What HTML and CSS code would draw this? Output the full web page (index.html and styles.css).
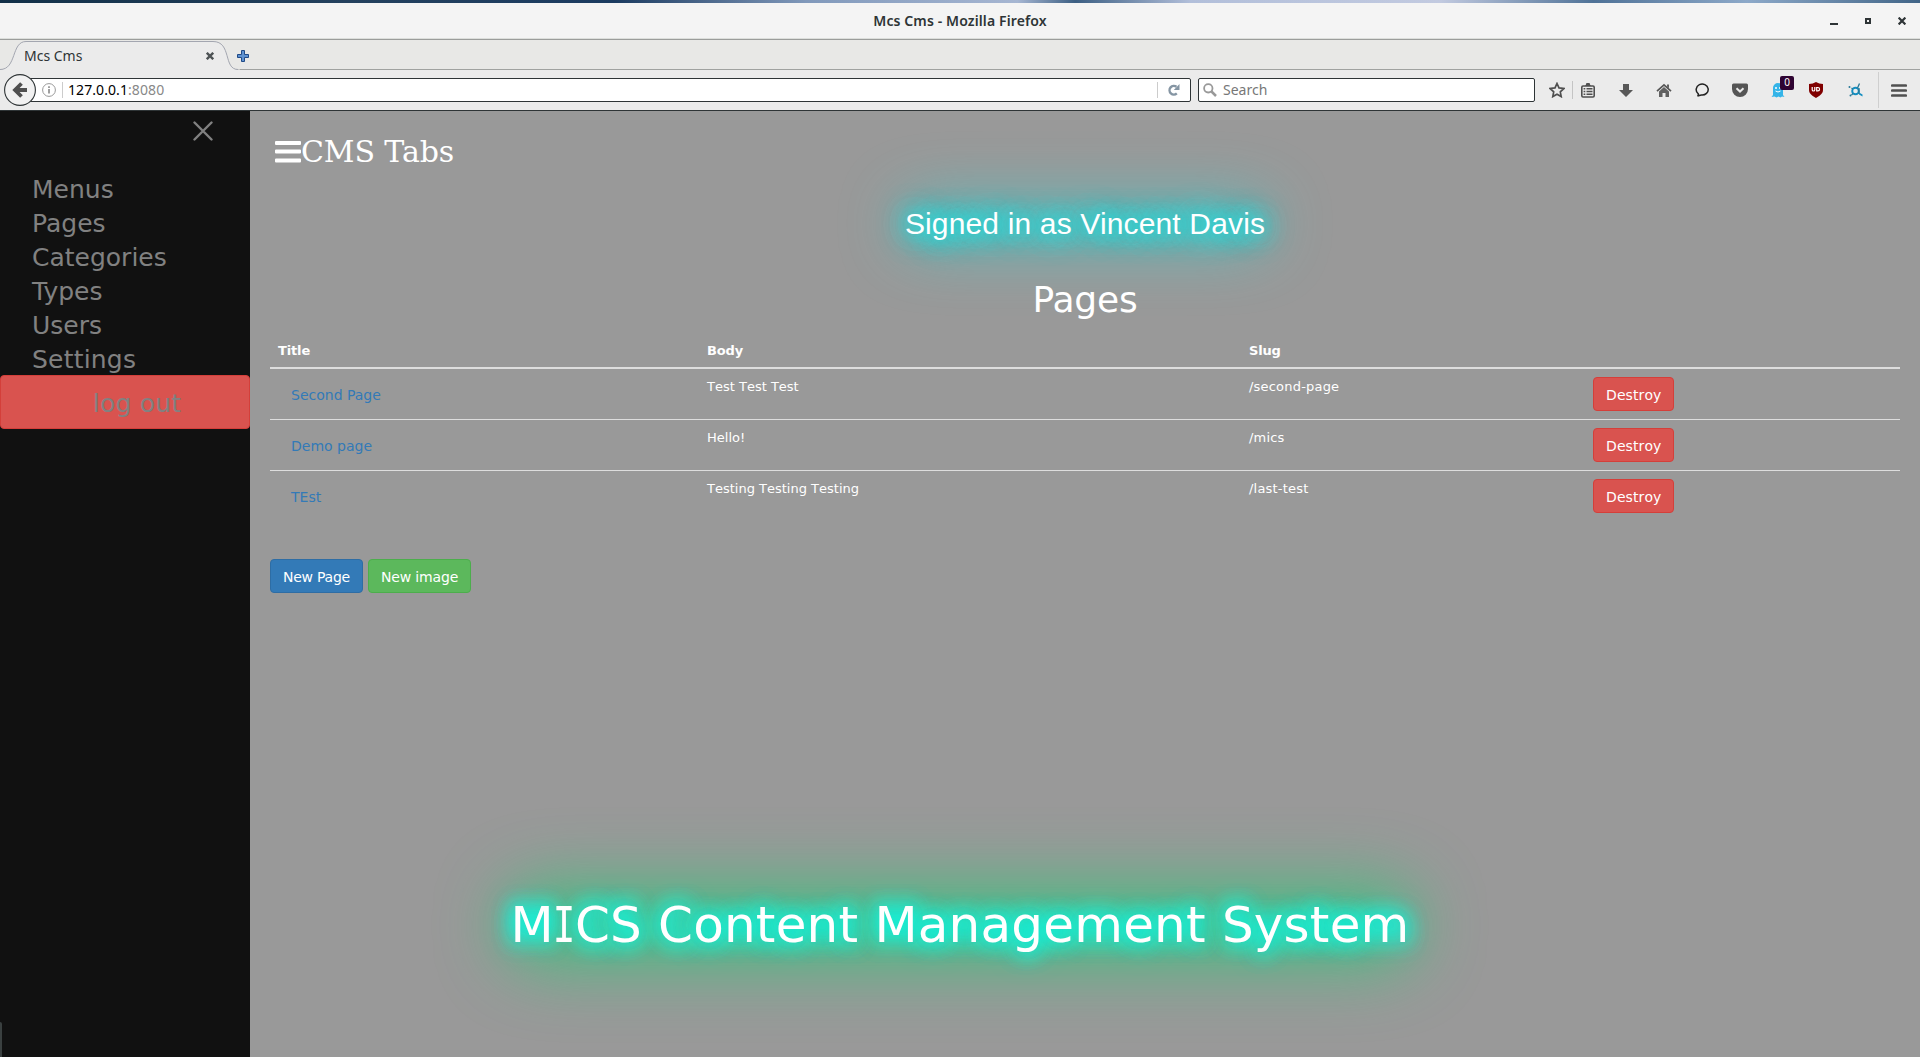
FILE: index.html
```html
<!DOCTYPE html>
<html lang="en">
<head>
<meta charset="utf-8">
<title>Mcs Cms</title>
<link rel="stylesheet" href="styles.css">
</head>
<body>
<div class="desktop-strip"></div>
<header class="titlebar">
  <span class="window-title">Mcs Cms - Mozilla Firefox</span>
  <div class="window-controls">
    <svg width="8" height="8" viewBox="0 0 8 8"><path d="M0 7h8" stroke="#2e3436" stroke-width="2"/></svg>
    <svg width="6" height="6" viewBox="0 0 6 6"><path d="M1 1h4v4H1z" fill="none" stroke="#2e3436" stroke-width="2"/></svg>
    <svg width="8" height="8" viewBox="0 0 8 8"><path d="M.6.6l6.8 6.8M7.4.6L.6 7.4" stroke="#2e3436" stroke-width="2.2"/></svg>
  </div>
</header>
<div class="tabbar">
  <svg class="tab-shape" width="240" height="31" viewBox="0 0 240 31"><path d="M0 29.500C17 29.500 11 1.500 26 1.500H213C232 1.500 223 29.500 238 29.500H240V31H0Z" fill="#ebebeb"/><path d="M0 29.500C17 29.500 11 1.500 26 1.500H213C232 1.500 223 29.500 238 29.500" fill="none" stroke="#a3a6b0"/></svg>
  <span class="tab-title">Mcs Cms</span>
  <svg class="tab-close" width="8" height="8" viewBox="0 0 8 8"><path d="M.8.8l6.400 6.400M7.200.8L.8 7.200" stroke="#4d5254" stroke-width="2.400"/></svg>
  <svg class="tab-new" width="12" height="12" viewBox="0 0 12 12"><path d="M4.500.5h3v4h4v3h-4v4h-3v-4h-4v-3h4z" fill="#5f92d0" stroke="#204a87"/></svg>
</div>
<nav class="toolbar">
  <div class="urlbar">
    <svg class="info" width="14" height="14" viewBox="0 0 14 14"><circle cx="7" cy="7" r="6.400" fill="none" stroke="#999"/><path d="M7 6v4.500M7 3.200v1.800" stroke="#888" stroke-width="1.600"/></svg>
    <span class="sep"></span>
    <span class="url">127.0.0.1<span class="port">:8080</span></span>
    <span class="sep reload-sep"></span>
    <svg class="reload" width="12" height="12" viewBox="0 0 12 12"><path d="M8.800 9.300A4.300 4.300 0 1 1 8.500 2.800" fill="none" stroke="#8595a3" stroke-width="2.400"/><path d="M11.500 0v6H5.800z" fill="#8595a3"/></svg>
  </div>
  <svg class="back" width="32" height="32" viewBox="0 0 32 32"><circle cx="16" cy="16" r="15.400" fill="#f1f1f1" stroke="#2e3436" stroke-width="1.100"/><path d="M23 16H12M17.500 9.500L11 16l6.500 6.500" fill="none" stroke="#505050" stroke-width="3.800"/></svg>
  <div class="searchbar">
    <svg width="14" height="14" viewBox="0 0 14 14"><circle cx="5.300" cy="5.300" r="4.200" fill="none" stroke="#999" stroke-width="1.800"/><path d="M8.500 8.500l4.500 4.500" stroke="#999" stroke-width="2.500"/></svg>
    <span>Search</span>
  </div>
  <div class="actions">
    <svg class="star" width="16" height="16" viewBox="0 0 16 16"><path d="M8 1.500l2 4.400 4.900.6-3.600 3.300.9 4.800L8 12.200l-4.200 2.400.9-4.800L1.100 6.500 6 5.900z" fill="none" stroke="#505050" stroke-width="1.700"/></svg>
    <span class="tool-sep"></span>
    <svg class="list" width="14" height="15" viewBox="0 0 14 15"><path d="M5 1.500a2 2 0 0 1 4 0L10 3H4z" fill="#505050"/><rect x=".8" y="3" width="12.400" height="11" rx="1.200" fill="#ebebeb" stroke="#505050" stroke-width="1.600"/><path d="M2.600 5.700h1.700M5.500 5.700h6M2.600 8.500h1.700M5.500 8.500h6M2.600 11.300h1.700M5.500 11.300h6" stroke="#505050" stroke-width="1.500"/></svg>
    <svg class="down" width="14" height="15" viewBox="0 0 14 15"><path d="M4 1h6v6h4l-7 7L0 7h4z" fill="#585858"/></svg>
    <svg class="home" width="16" height="15" viewBox="0 0 16 15"><path d="M1 8.200L8 1.800l7 6.400" fill="none" stroke="#555" stroke-width="1.700"/><path d="M11 1.500h2v4l-2-2zM3 8.500l5-4.600 5 4.600V14H9.500v-4h-3v4H3z" fill="#606060"/></svg>
    <svg class="chat" width="15" height="14" viewBox="0 0 15 14"><path d="M3 10.500A6 5.500 0 1 1 6.300 12L2.500 13c1-.7 1.200-1.500.5-2.500z" fill="none" stroke="#222" stroke-width="1.500"/></svg>
    <svg class="pocket" width="16" height="15" viewBox="0 0 16 15"><path d="M1.500.5h13a1.500 1.500 0 0 1 1.500 1.500v4a8 8 0 0 1-16 0V2A1.500 1.500 0 0 1 1.500.5z" fill="#555"/><path d="M4.500 5.300L8 8.600l3.500-3.300" fill="none" stroke="#ebebeb" stroke-width="2"/></svg>
    <div class="ghost">
      <svg width="14" height="15" viewBox="0 0 14 15"><path d="M2 12V5a5 5 0 0 1 10 0v7l1.500 2-2.500-.5-1.500 1-2-1-2 1-2-1-3 .5z" fill="#34b4e8"/><circle cx="5" cy="5" r="1" fill="#fff"/><circle cx="9" cy="5" r="1" fill="#fff"/><path d="M4.500 8q2.500 2 5 0" fill="none" stroke="#fff"/></svg>
      <span class="badge">0</span>
    </div>
    <svg class="shield" width="14" height="16" viewBox="0 0 14 16"><path d="M7 0q3 2 7 2v6c0 4-4 6-7 8-3-2-7-4-7-8V2q4 0 7-2z" fill="#800000"/><path d="M3.200 5v2.700a1.300 1.300 0 0 0 2.600 0V5M7.700 5.500v3.300h1.200a1.600 1.600 0 0 0 0-3.300z" fill="none" stroke="#fff" stroke-width="1.200"/></svg>
    <svg class="molecule" width="16" height="14" viewBox="0 0 16 14"><circle cx="7.500" cy="8" r="3.300" fill="none" stroke="#148ec0" stroke-width="1.900"/><path d="M9.500 5l2-4.500M11 5v6M4.800 6L3.500 5M5 10.500L3.500 12" stroke="#287896" stroke-width="1.300"/><path d="M11 9.500l3.500 2v2l-3.500-2z" fill="#148ec0"/><circle cx="1.500" cy="4" r="1" fill="#287896"/><circle cx="2.500" cy="12.500" r="1" fill="#287896"/></svg>
    <span class="menu-sep"></span>
    <svg class="burger" width="16" height="13" viewBox="0 0 16 13"><path d="M1.200 1.500h13.600M1.200 6.500h13.600M1.200 11.500h13.600" stroke="#505050" stroke-width="2.700" stroke-linecap="round"/></svg>
  </div>
</nav>
<div class="viewport">
  <aside class="sidebar">
    <svg class="closebtn" width="20" height="20" viewBox="0 0 20 20"><path d="M1.500 1.500l17 17M18.500 1.500l-17 17" stroke="#818181" stroke-width="2.400" stroke-linecap="round"/></svg>
    <a>Menus</a>
    <a>Pages</a>
    <a>Categories</a>
    <a>Types</a>
    <a>Users</a>
    <a class="settings">Settings</a>
    <a class="logout">log out</a>
    <span class="edge"></span>
  </aside>
  <main class="content">
    <div class="brand"><svg width="26" height="22" viewBox="0 0 26 22"><path d="M1 0h24q1 0 1 1v2q0 1-1 1H1Q0 4 0 3V1q0-1 1-1zM1 8.500h24q1 0 1 1v2q0 1-1 1H1q-1 0-1-1v-2q0-1 1-1zM1 17.500h24q1 0 1 1v2q0 1-1 1H1q-1 0-1-1v-2q0-1 1-1z" fill="#fff"/></svg><span>CMS Tabs</span></div>
    <p class="signed"><span class="glow">Signed in as Vincent Davis</span></p>
    <h1><span>Pages</span></h1>
    <table>
      <colgroup><col class="c-title"><col class="c-body"><col class="c-slug"><col></colgroup>
      <thead><tr><th>Title</th><th>Body</th><th>Slug</th><th></th></tr></thead>
      <tbody>
        <tr><td><a class="btn link">Second Page</a></td><td>Test Test Test</td><td class="slug">/second-page</td><td><a class="btn danger">Destroy</a></td></tr>
        <tr><td><a class="btn link">Demo page</a></td><td>Hello!</td><td class="slug">/mics</td><td><a class="btn danger">Destroy</a></td></tr>
        <tr><td><a class="btn link">TEst</a></td><td>Testing Testing Testing</td><td class="slug">/last-test</td><td><a class="btn danger">Destroy</a></td></tr>
      </tbody>
    </table>
    <div class="buttons"><a class="btn primary">New Page</a><a class="btn success">New image</a></div>
  </main>
  <footer class="footer"><span class="glow">M<span class="slab">I</span>CS Content Management System</span></footer>
</div>
</body>
</html>
```
FILE: styles.css
```css
* { box-sizing: border-box; }
body {
  margin: 0; height: 1057px; overflow: hidden;
  display: flex; flex-direction: column;
  font-family: "DejaVu Sans", sans-serif; font-size: 13px; line-height: 1.428571; color: #fff;
}
svg { display: block; flex: none; }
.desktop-strip { height: 3px; flex: none; background: linear-gradient(90deg, #123048 0, #24415e 18%, #1b3b60 32%, #8199bb 42%, #a6b6d2 53%, #3c5f83 56%, #b2bfda 62%, #c2cae0 75%, #4f7297 83%, #8da9c9 91%, #416587 100%); }

.titlebar, .tabbar, .toolbar { font-family: "Noto Sans", sans-serif; color: #2e3436; flex: none; display: flex; align-items: center; }
.titlebar { height: 37px; background: #f4f4f4; border-bottom: 1px solid #9b9d9b; justify-content: center; position: relative; box-shadow: inset 0 -1px #dcdedb; }
.window-title { font-size: 14px; font-weight: 600; letter-spacing: .12px; }
.window-controls { position: absolute; right: 14px; top: 14px; display: flex; gap: 27px; align-items: center; }
.tabbar { height: 30px; background: #e8e8e6; border-bottom: 1px solid #a0a2a0; position: relative; }
.tab-shape { position: absolute; left: 0; top: 0; }
.tab-title { position: relative; margin-left: 24px; padding-top: 2px; width: 182px; font-size: 14px; }
.tab-close { position: relative; margin-top: 2px; }
.tab-new { margin: 2px 0 0 23px; }

.toolbar { height: 41px; background: #ebebeb; border-bottom: 1px solid #2e3436; position: relative; font-size: 14px; }
.back { position: absolute; left: 4px; top: 4px; }
.urlbar { margin-left: 20px; width: 1171px; height: 24px; background: #fff; border: 1px solid #2e3436; border-radius: 2px; display: flex; align-items: center; padding-left: 21px; }
.sep { width: 1px; height: 16px; background: #ccc; margin: 0 5px 0 6px; }
.url { color: #000; flex: 1; letter-spacing: .08px; }
.port { color: #888; }
.reload-sep { margin: 0 10px 0 0; }
.reload { margin-right: 10px; }
.searchbar { margin-left: 7px; width: 337px; height: 24px; background: #fff; border: 1px solid #2e3436; border-radius: 2px; display: flex; align-items: center; gap: 6px; padding-left: 4px; color: #777; }
.actions { display: flex; align-items: center; flex: 1; height: 100%; }
.star { margin-left: 14px; }
.tool-sep { width: 1px; height: 18px; background: #c4c4c4; margin-left: 7px; }
.list { margin-left: 8px; }
.down { margin-left: 24px; }
.home { margin-left: 23px; }
.chat { margin-left: 23px; }
.pocket { margin-left: 22px; }
.ghost { margin-left: 23px; position: relative; }
.badge { position: absolute; left: 9px; top: -7px; width: 14px; height: 14px; border-radius: 2px; background: #2f0432; color: #fff; font: 10px/13px "Noto Sans", sans-serif; text-align: center; }
.shield { margin-left: 24px; }
.molecule { margin-left: 25px; }
.menu-sep { width: 1px; height: 36px; background: #cfcfcf; margin-left: 14px; }
.burger { margin-left: 12px; }

.viewport { flex: 1; min-height: 0; display: flex; background: #999; position: relative; }
.sidebar { width: 250px; background: #111; display: flex; flex-direction: column; position: relative; font-size: 25px; line-height: 34px; color: #818181; }
.closebtn { margin: 10px 0 30px 193px; }
.sidebar a { padding: 2px 0 0 32px; height: 34px; }
.sidebar .settings { letter-spacing: .2px; }
.sidebar .logout { height: 54px; line-height: 54px; padding: 1px 0 0 24px; letter-spacing: .2px; text-align: center; background: #d9534f; border: 1px solid #d43f3a; border-radius: 4px; }
.edge { position: absolute; left: 0; bottom: 0; width: 2px; height: 35px; background: #3a4040; border-top-right-radius: 3px; }
.content { flex: 1; padding: 0 20px; }
.brand { display: flex; align-items: center; margin: 19px 0 0 5px; height: 43px; font-family: "DejaVu Serif", serif; font-size: 30px; letter-spacing: -.1px; }
.brand span { padding-top: 1px; }
/* Bright halo hugging the letters, with a wide soft aura behind it */
.glow { position: relative; isolation: isolate; display: inline-block; }
.glow::before { content: ""; position: absolute; z-index: -1; border-radius: 40px; }
.signed { margin: 29px 0 0; text-align: center; font: 30px/43px "Liberation Sans", sans-serif; letter-spacing: .15px; text-shadow: 0 0 20px #1ee0e0, 0 0 20px #1ee0e0, 0 0 30px #1ee0e0, 0 0 30px #1ee0e0; }
.signed .glow::before { inset: 0 -4px; background: rgba(32, 222, 222, .55); filter: blur(31px); }
h1 { margin: 35px 0 0; text-align: center; font-size: 36px; font-weight: 400; line-height: 40px; letter-spacing: -.2px; position: relative; }
table { margin-top: 12px; width: 100%; table-layout: fixed; border-collapse: collapse; position: relative; }
.c-title { width: 429px; }
.c-body { width: 542px; }
.c-slug { width: 344px; }
th { text-align: left; padding: 9px 8px 7px; line-height: 19px; letter-spacing: -.15px; border-bottom: 2px solid #ddd; }
td { padding: 8px; vertical-align: top; height: 51px; line-height: 19px; font-kerning: none; }
.slug { letter-spacing: .2px; }
tbody tr + tr td { border-top: 1px solid #ddd; }
.btn { display: inline-block; height: 34px; padding: 7px 12px 5px; font-size: 14px; line-height: 20px; letter-spacing: .1px; border: 1px solid transparent; border-radius: 4px; vertical-align: top; }
.link { color: #337ab7; font-kerning: auto; letter-spacing: 0; }
.danger { background: #d9534f; border-color: #d43f3a; }
.buttons { display: flex; gap: 5px; margin-top: 37px; }
.primary { background: #337ab7; border-color: #2e6da4; letter-spacing: -.25px; }
.success { background: #5cb85c; border-color: #4cae4c; letter-spacing: -.15px; }
.footer { position: absolute; left: 0; right: 0; bottom: 96px; text-align: center; font-size: 50px; line-height: 72px; letter-spacing: .2px; font-kerning: none; text-shadow: 0 0 20px #10f5df, 0 0 20px #10f5df, 0 0 20px #10f5df, 0 0 30px #10f5df; pointer-events: none; }
.footer .glow::before { inset: -6px -8px; background: rgba(22, 214, 112, .58); filter: blur(33px); }
.slab { display: inline-block; font-family: "DejaVu Sans Mono", monospace; line-height: 1; margin: 0 -4.600px; transform: scaleX(.75); text-shadow: none; }
```
